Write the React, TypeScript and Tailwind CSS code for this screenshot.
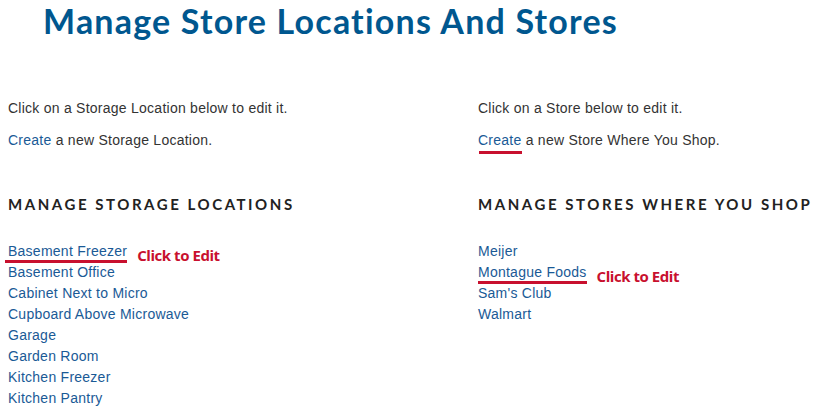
const STORAGE = [
  'Basement Freezer',
  'Basement Office',
  'Cabinet Next to Micro',
  'Cupboard Above Microwave',
  'Garage',
  'Garden Room',
  'Kitchen Freezer',
  'Kitchen Pantry',
]

const STORES = ['Meijer', 'Montague Foods', "Sam's Club", 'Walmart']

const body = { fontFamily: '"Liberation Sans", Arial, sans-serif' }
const heading = { fontFamily: 'Lato, "Open Sans", sans-serif' }
const note = { fontFamily: '"Open Sans", "Noto Sans", sans-serif' }

function ClickToEdit() {
  return (
    <span
      className="absolute left-full top-[4px] ml-[10px] whitespace-nowrap text-[15px] font-bold leading-[21px] tracking-[-0.03em] text-[#c8102e]"
      style={note}
    >
      Click to Edit
    </span>
  )
}

function Column({
  intro,
  create,
  title,
  items,
  marked,
  markCreate,
  lineLeft,
}: {
  intro: string
  create: string
  title: string
  items: string[]
  marked: string
  markCreate?: boolean
  lineLeft: string
}) {
  return (
    <div className="tracking-[0.25px]">
      <p className="text-[14px] leading-[21px] text-[#333]">{intro}</p>
      <p className="mt-[11px] text-[14px] leading-[21px] text-[#333]">
        <a className="relative text-[#1a5a96]">
          Create
          {markCreate && <span className="absolute left-[1px] right-0 top-[19px] h-[3px] bg-[#c8102e]" />}
        </a>{' '}
        {create}
      </p>
      <h2
        className="mt-[43px] text-[15px] font-bold uppercase leading-[21px] tracking-[0.17em] text-[#222]"
        style={heading}
      >
        {title}
      </h2>
      <ul className="mt-[26px]">
        {items.map((item) => (
          <li key={item} className="text-[14px] leading-[21px]">
            <a className="relative inline-block text-[#1a5a96]">
              {item}
              {item === marked && (
                <>
                  <span className={`absolute right-0 top-[19px] h-[3px] bg-[#c8102e] ${lineLeft}`} />
                  <ClickToEdit />
                </>
              )}
            </a>
          </li>
        ))}
      </ul>
    </div>
  )
}

export default function App() {
  return (
    <div className="min-h-screen bg-white" style={body}>
      <h1
        className="pl-[43px] text-[34px] font-bold leading-[42px] tracking-[1.2px] text-[#00578f]"
        style={heading}
      >
        Manage Store Locations And Stores
      </h1>
      <div className="mt-[56px] grid grid-cols-[470px_1fr] px-2">
        <Column
          intro="Click on a Storage Location below to edit it."
          create="a new Storage Location."
          title="Manage Storage Locations"
          items={STORAGE}
          marked="Basement Freezer"
          lineLeft="-left-[3px]"
        />
        <Column
          intro="Click on a Store below to edit it."
          create="a new Store Where You Shop."
          title="Manage Stores Where You Shop"
          items={STORES}
          marked="Montague Foods"
          markCreate
          lineLeft="left-0"
        />
      </div>
    </div>
  )
}
